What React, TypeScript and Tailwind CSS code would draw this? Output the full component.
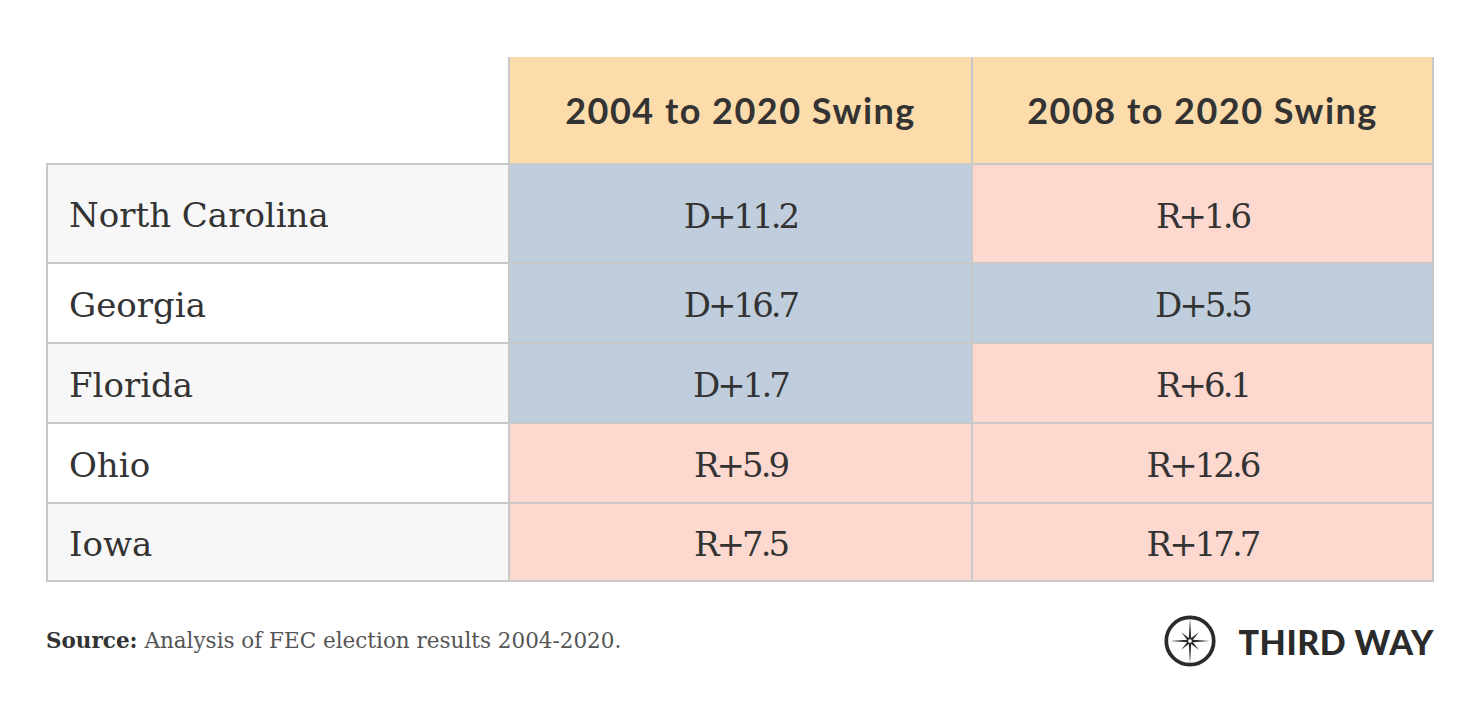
import React from "react";

type Cell = { value: string; tone: "d" | "r" };

const rows: { state: string; a: Cell; b: Cell; tall?: boolean; shade?: boolean }[] = [
  { state: "North Carolina", a: { value: "D+11.2", tone: "d" }, b: { value: "R+1.6", tone: "r" }, tall: true, shade: true },
  { state: "Georgia", a: { value: "D+16.7", tone: "d" }, b: { value: "D+5.5", tone: "d" } },
  { state: "Florida", a: { value: "D+1.7", tone: "d" }, b: { value: "R+6.1", tone: "r" }, shade: true },
  { state: "Ohio", a: { value: "R+5.9", tone: "r" }, b: { value: "R+12.6", tone: "r" } },
  { state: "Iowa", a: { value: "R+7.5", tone: "r" }, b: { value: "R+17.7", tone: "r" }, shade: true },
];

const serif = "font-['DejaVu_Serif',serif]";

const Compass = () => (
  <svg width="52" height="52" viewBox="0 0 50 50" className="text-[#2b2b2b]">
    <circle cx="25" cy="25" r="22.8" fill="none" stroke="currentColor" strokeWidth="3.6" />
    <path
      fill="currentColor"
      d="M25 3 L26.15 22.23 L33.49 16.51 L27.77 23.85 L44 25 L27.77 26.15 L33.49 33.49 L26.15 27.77 L25 47 L23.85 27.77 L16.51 33.49 L22.23 26.15 L6 25 L22.23 23.85 L16.51 16.51 L23.85 22.23 Z"
    />
    <circle cx="25" cy="25" r="2.4" fill="#fff" stroke="currentColor" strokeWidth="1.2" />
  </svg>
);

const ValueCell = ({ cell, last, tall, bottom }: { cell: Cell; last?: boolean; tall?: boolean; bottom?: boolean }) => (
  <div
    className={`flex items-center justify-center border-l-2 border-t-2 border-[#c8c8c8] pt-[5px] ${
      cell.tone === "d" ? "bg-[#bfcddc]" : "bg-[#fcd8cf]"
    } ${last ? "border-r-2" : ""} ${bottom ? "border-b-2" : ""} ${tall ? "h-[99px]" : "h-[80px]"}`}
  >
    <span className={`${serif} text-[34px] tracking-[-3px] text-[#333]`}>{cell.value}</span>
  </div>
);

export default function App() {
  return (
    <div className="min-h-screen bg-white px-[46px] pt-[57px] text-[#333]">
      <div className="grid grid-cols-[462px_463px_463px]">
        <div className="h-[106px]" />
        {["2004 to 2020 Swing", "2008 to 2020 Swing"].map((h, i) => (
          <div
            key={h}
            className={`flex h-[106px] items-center justify-center border-l-2 border-[#c8c8c8] bg-[#fddcab] ${
              i === 1 ? "border-r-2" : ""
            }`}
          >
            <span className="font-['Lato',sans-serif] text-[36px] font-bold tracking-[1.5px] text-[#333]">{h}</span>
          </div>
        ))}

        {rows.map((r, i) => {
          const bottom = i === rows.length - 1;
          return (
            <React.Fragment key={r.state}>
              <div
                className={`flex items-center border-l-2 border-t-2 border-[#c8c8c8] pl-[21px] pt-[4px] ${
                  r.shade ? "bg-[#f7f7f7]" : "bg-white"
                } ${bottom ? "border-b-2" : ""} ${r.tall ? "h-[99px]" : "h-[80px]"}`}
              >
                <span className={`${serif} text-[34px] text-[#333]`}>{r.state}</span>
              </div>
              <ValueCell cell={r.a} tall={r.tall} bottom={bottom} />
              <ValueCell cell={r.b} tall={r.tall} bottom={bottom} last />
            </React.Fragment>
          );
        })}
      </div>

      <div className="mt-[33px] flex items-center justify-between">
        <p className={`${serif} text-[21.5px] text-[#555]`}>
          <span className="font-bold text-[#333]">Source:</span> Analysis of FEC election results 2004-2020.
        </p>
        <div className="flex items-center gap-[23px]">
          <Compass />
          <span className="font-['Lato',sans-serif] text-[34px] font-black tracking-[0.5px] text-[#2b2b2b]">THIRD WAY</span>
        </div>
      </div>
    </div>
  );
}
